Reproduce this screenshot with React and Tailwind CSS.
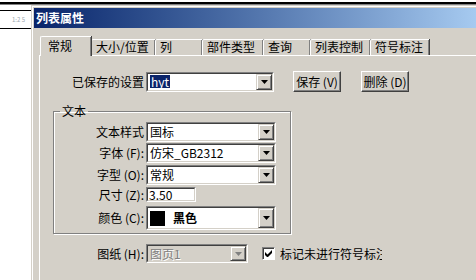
import React from "react";

const FONT = "font-['Noto_Sans_CJK_SC','Noto_Sans',sans-serif]";

const Arrow = ({ disabled }) => (
  <svg width="7" height="4" viewBox="0 0 7 4">
    <path d="M0 0h7L3.5 4z" fill={disabled ? "#808080" : "#000"} />
  </svg>
);

const DropButton = ({ disabled }) => (
  <div className="w-[16px] h-full shrink-0 bg-[#d4d0c8] border border-t-[#d4d0c8] border-l-[#d4d0c8] border-r-[#404040] border-b-[#404040] shadow-[inset_1px_1px_white,inset_-1px_-1px_#808080] flex items-center justify-center">
    <Arrow disabled={disabled} />
  </div>
);

const Sunken = ({ className = "", children }) => (
  <div
    className={`border border-t-[#808080] border-l-[#808080] border-r-white border-b-white ${className}`}
  >
    <div className="h-full border border-t-[#404040] border-l-[#404040] border-r-[#d4d0c8] border-b-[#d4d0c8] flex items-stretch">
      {children}
    </div>
  </div>
);

const Combo = ({ value, h = "h-[20px]", w = "w-[130px]", selected, disabled, children }) => (
  <Sunken className={`${h} ${w} shrink-0`}>
    <div className={`flex-1 flex items-center pl-[2px] overflow-hidden ${disabled ? "bg-[#d4d0c8]" : "bg-white"}`}>
      {children ? (
        children
      ) : selected ? (
        <span className="bg-[#0a246a] text-white px-px leading-[13px]">{value}</span>
      ) : (
        <span
          className={`leading-[14px] ${disabled ? "text-[#808080] [text-shadow:1px_1px_0_white]" : "text-black"}`}
        >
          {value}
        </span>
      )}
    </div>
    <DropButton disabled={disabled} />
  </Sunken>
);

const Button = ({ children }) => (
  <div className="w-[48px] h-[21px] bg-[#d4d0c8] border border-t-white border-l-white border-r-[#404040] border-b-[#404040] shadow-[inset_-1px_-1px_#808080] flex items-center justify-center leading-none">
    {children}
  </div>
);

const Tab = ({ label, w, active }) =>
  active ? (
    <div
      className={`${w} h-[20px] -mb-px relative z-10 bg-[#d4d0c8] border-l border-t border-white rounded-tl-[2px] shadow-[inset_-1px_0_#808080,1px_0_#404040] pl-[7px] pt-[2px] leading-[14px]`}
    >
      {label}
    </div>
  ) : (
    <div
      className={`${w} h-[16px] bg-[#d4d0c8] border-l border-t border-white rounded-tl-[2px] shadow-[inset_-1px_0_#808080,1px_0_#404040] pl-[4px] leading-[14px]`}
    >
      {label}
    </div>
  );

const Row = ({ label, children, className = "" }) => (
  <div className={`flex items-center ${className}`}>
    <div className="w-[91px] text-right pr-[1px] leading-[14px] shrink-0">{label}</div>
    <div className="pl-[1px]">{children}</div>
  </div>
);

export default function App() {
  return (
    <div className={`w-[476px] h-[280px] bg-white overflow-hidden flex flex-col text-[12px] text-black ${FONT}`}>
      <div className="h-[2px] shrink-0" />
      <div className="h-[2px] shrink-0 bg-black" />
      <div className="h-px shrink-0 bg-[#808080]" />
      <div className="flex flex-1 min-h-0">
        <div className="w-[31px] shrink-0 flex flex-col">
          <div className="h-[5px]" />
          <div className="h-px bg-black" />
          <div className="h-[17px] flex items-center pl-[12px] text-[6px] text-[#9aa8b0] leading-none whitespace-nowrap overflow-hidden">
            1:2 5
          </div>
          <div className="h-px bg-black" />
        </div>

        <div className="flex-1 min-w-0 bg-[#d4d0c8] border-l border-t border-[#d4d0c8] flex flex-col">
          <div className="flex-1 border-l border-t border-white flex flex-col">
            <div className="h-[20px] shrink-0 mt-px ml-px bg-gradient-to-r from-[#0a246a] to-[#a6caf0] flex items-center pl-[2px] text-white font-bold leading-none">
              列表属性
            </div>

            <div className="flex-1 flex flex-col pl-[6px] pt-[7px]">
              <div className="flex items-end h-[20px] pl-px">
                <Tab label="常规" w="w-[51px]" active />
                <Tab label="大小/位置" w="w-[64px]" />
                <Tab label="列" w="w-[47px]" />
                <Tab label="部件类型" w="w-[61px]" />
                <Tab label="查询" w="w-[47px]" />
                <Tab label="列表控制" w="w-[60px]" />
                <Tab label="符号标注" w="w-[59px]" />
              </div>

              <div className="flex-1 border-l border-t border-white pt-[15px]">
                <div className="flex items-center">
                  <div className="w-[106px] text-right pr-[2px] leading-[14px]">已保存的设置</div>
                  <Combo value="hyt" selected w="w-[128px]" h="h-[20px]" />
                  <div className="ml-[19px]">
                    <Button>保存 (V)</Button>
                  </div>
                  <div className="ml-[20px]">
                    <Button>删除 (D)</Button>
                  </div>
                </div>

                <fieldset className="ml-[13px] mt-[12px] w-[238px] h-[130px] border border-[#808080] shadow-[1px_1px_0_white,inset_1px_1px_0_white] pl-0 pt-[4px]">
                  <legend className="ml-[6px] px-[2px] leading-[14px]">文本</legend>
                  <div className="flex flex-col gap-[1px]">
                    <Row label="文本样式">
                      <Combo value="国标" h="h-[20px]" />
                    </Row>
                    <Row label="字体 (F):">
                      <Combo value="仿宋_GB2312" h="h-[20px]" />
                    </Row>
                    <Row label="字型 (O):" className="mt-px">
                      <Combo value="常规" h="h-[20px]" />
                    </Row>
                    <Row label="尺寸 (Z):" className="mt-px">
                      <Sunken className="w-[50px] h-[15px]">
                        <div className="flex-1 bg-white flex items-center pl-px leading-[11px]">3.50</div>
                      </Sunken>
                    </Row>
                    <Row label="颜色 (C):" className="mt-[3px]">
                      <Combo h="h-[24px]">
                        <div className="flex items-center gap-[8px]">
                          <div className="w-[15px] h-[15px] bg-black" />
                          <span className="font-bold leading-[14px]">黑色</span>
                        </div>
                      </Combo>
                    </Row>
                  </div>
                </fieldset>

                <div className="flex items-center mt-[10px] ml-[14px]">
                  <Row label="图纸 (H):">
                    <Combo value="图页1" w="w-[102px]" h="h-[19px]" disabled />
                  </Row>
                  <div className="ml-[14px] w-[13px] h-[13px] bg-white border border-t-[#808080] border-l-[#808080] border-r-white border-b-white shadow-[inset_1px_1px_#404040] flex items-center justify-center">
                    <svg width="7" height="7" viewBox="0 0 7 7">
                      <path d="M0 2v3l2 2h1l4-4V0L2.5 4.5z" fill="#000" />
                    </svg>
                  </div>
                  <div className="ml-[5px] w-[102px] overflow-hidden whitespace-nowrap leading-[14px]">
                    标记未进行符号标注
                  </div>
                </div>
              </div>
            </div>
          </div>
        </div>
      </div>
    </div>
  );
}
